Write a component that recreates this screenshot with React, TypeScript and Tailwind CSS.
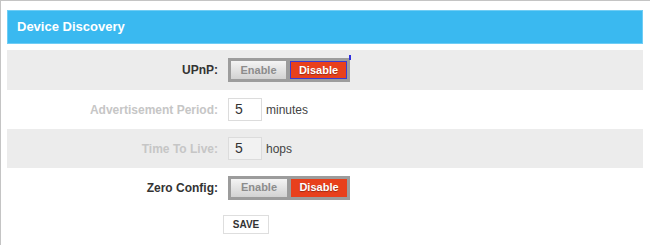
import React from 'react'

type ToggleProps = { focused?: boolean }

function Toggle({ focused }: ToggleProps) {
  return (
    <div className="relative flex h-[24px] w-[122px] gap-[4px] bg-[#9c9c9c] p-[3px]">
      <button className="flex flex-1 items-center justify-center bg-gradient-to-b from-[#f4f4f4] to-[#d2d2d2] text-[11px] font-bold text-[#8c8c8c]">
        Enable
      </button>
      <button
        className={`flex flex-1 items-center justify-center bg-[#e8401c] text-[11px] font-bold text-white [text-shadow:0_1px_1px_rgba(0,0,0,0.35)] ${
          focused ? 'border border-[#3b3bd0]' : ''
        }`}
      >
        Disable
      </button>
      {focused && <span className="absolute -right-[1px] -top-[3px] h-[5px] w-[2px] bg-[#2f2fe0]" />}
    </div>
  )
}

function NumberField({ value, unit, disabled }: { value: string; unit: string; disabled?: boolean }) {
  return (
    <div className="flex items-center gap-[4px]">
      <div
        className={`flex h-[23px] w-[34px] items-center border border-[#dcdcdc] pl-[6px] text-[14px] text-[#333] ${
          disabled ? 'bg-[#f2f2f2]' : 'bg-white'
        }`}
      >
        {value}
      </div>
      <span className="text-[12px] text-[#444]">{unit}</span>
    </div>
  )
}

const rows = [
  { label: 'UPnP:', muted: false, gray: true, h: 'h-[40px]', control: <Toggle focused /> },
  { label: 'Advertisement Period:', muted: true, gray: false, h: 'h-[39px]', control: <NumberField value="5" unit="minutes" /> },
  { label: 'Time To Live:', muted: true, gray: true, h: 'h-[39px]', control: <NumberField value="5" unit="hops" disabled /> },
  { label: 'Zero Config:', muted: false, gray: false, h: 'h-[39px]', control: <Toggle /> },
]

export default function App() {
  return (
    <div
      className="h-[245px] w-[650px] overflow-hidden border-l border-t border-[#c4c4c4] bg-white pl-[6px] pt-[9px]"
      style={{ fontFamily: '"Liberation Sans", Arial, sans-serif' }}
    >
      <div className="w-[636px]">
        <div className="flex h-[34px] items-center border border-[#6fcdf5] bg-[#3ab9f0] pl-[9px] text-[13px] font-bold text-white">
          Device Discovery
        </div>

        <div className="mt-[6px]">
          {rows.map((row) => (
            <div
              key={row.label}
              className={`grid grid-cols-[211px_1fr] items-center gap-[10px] ${row.h} ${row.gray ? 'bg-[#ececec]' : 'bg-white'}`}
            >
              <span className={`text-right text-[12px] font-bold ${row.muted ? 'text-[#c6c6c6]' : 'text-[#333]'}`}>
                {row.label}
              </span>
              <div>{row.control}</div>
            </div>
          ))}
        </div>

        <div className="mt-[8px] pl-[216px]">
          <button className="flex h-[19px] w-[46px] items-center justify-center border border-[#dedede] bg-white text-[10px] font-bold text-[#333]">
            SAVE
          </button>
        </div>
      </div>
    </div>
  )
}
